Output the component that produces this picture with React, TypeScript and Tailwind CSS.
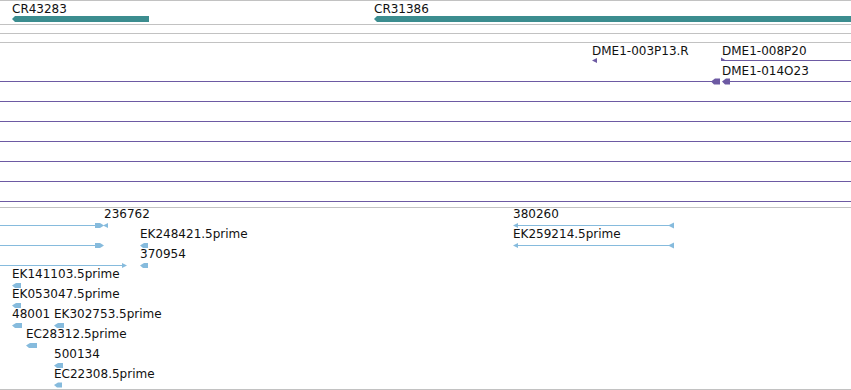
import React from "react";

// colours taken from the track glyphs
const TEAL = "#3c8d8f";
const PURPLE = "#6d5aa3";
const BLUE = "#86bbdd";

interface Label {
  text: string;
  x: number;
  y: number;
}

const Labels: React.FC<{ items: Label[] }> = ({ items }) => (
  <>
    {items.map((l) => (
      <div
        key={l.text}
        className="absolute whitespace-nowrap text-[12px] leading-[14px] text-[#111] font-['DejaVu_Sans',sans-serif]"
        style={{ left: l.x, top: l.y }}
      >
        {l.text}
      </div>
    ))}
  </>
);

// left pointing block, c = vertical centre
const leftBlock = (x0: number, x1: number, c: number, h = 5) => {
  const t = c - h / 2;
  const b = c + h / 2;
  return `${x0},${c} ${x0 + 4},${t} ${x1},${t} ${x1},${b} ${x0 + 3},${b}`;
};

const rightBlock = (x0: number, x1: number, c: number, h = 5) => {
  const t = c - h / 2;
  const b = c + h / 2;
  return `${x0},${t} ${x1 - 4},${t} ${x1},${c} ${x1 - 4},${b} ${x0},${b}`;
};

const Separator: React.FC = () => <div className="h-px w-full bg-[#c2c2c2]" />;

const GeneTrack: React.FC = () => (
  <div className="relative h-[23px] w-full">
    <svg className="absolute inset-0" width={851} height={23}>
      <polygon points="12,18 15,15 149,15 149,21 15,21" fill={TEAL} />
      <polygon points="374,18 377,15 851,15 851,21 377,21" fill={TEAL} />
    </svg>
    <Labels
      items={[
        { text: "CR43283", x: 12, y: 1 },
        { text: "CR31386", x: 374, y: 1 },
      ]}
    />
  </div>
);

const CloneTrack: React.FC = () => {
  const rows = [58, 78, 98, 118, 138, 158];
  return (
    <div className="relative h-[164px] w-full">
      <svg className="absolute inset-0" width={851} height={164}>
        {/* DME1-003P13.R */}
        <polygon points="592,17.5 597,15 597,20" fill={PURPLE} />
        {/* DME1-008P20 */}
        <rect x={722} y={17} width={129} height={1} fill={PURPLE} />
        <polygon points="721,14.5 726,17.5 721,18" fill={PURPLE} />
        {/* DME1-014O23 and neighbour */}
        <rect x={0} y={38} width={712} height={1} fill={PURPLE} />
        <rect x={730} y={38} width={121} height={1} fill={PURPLE} />
        <polygon points={leftBlock(711, 720, 38.5, 6)} fill={PURPLE} />
        <polygon points={leftBlock(722, 730, 38.5, 6)} fill={PURPLE} />
        {rows.map((y) => (
          <rect key={y} x={0} y={y} width={851} height={1} fill={PURPLE} />
        ))}
      </svg>
      <Labels
        items={[
          { text: "DME1-003P13.R", x: 592, y: 1 },
          { text: "DME1-008P20", x: 722, y: 1 },
          { text: "DME1-014O23", x: 722, y: 21 },
        ]}
      />
    </div>
  );
};

const EstTrack: React.FC = () => {
  const left: [number, number, number][] = [
    [140, 148, 37.5],
    [140, 148, 57.5],
    [12, 21, 77.5],
    [12, 21, 97.5],
    [12, 22, 117.5],
    [54, 64, 117.5],
    [26, 37, 137.5],
    [54, 63, 157.5],
    [54, 62, 177],
  ];
  return (
    <div className="relative h-[181px] w-full">
      <svg className="absolute inset-0" width={851} height={181}>
        {/* 236762 */}
        <rect x={0} y={17} width={96} height={1} fill={BLUE} />
        <polygon points={rightBlock(95, 104, 17.5)} fill={BLUE} />
        <polygon points="103,17.5 108,15 108,20" fill={BLUE} />
        {/* row 2 */}
        <rect x={0} y={37} width={96} height={1} fill={BLUE} />
        <polygon points={rightBlock(95, 104, 37.5)} fill={BLUE} />
        {/* row 3 */}
        <rect x={0} y={57} width={123} height={1} fill={BLUE} />
        <polygon points="122,55 127,57.5 122,60" fill={BLUE} />
        {left.map(([a, b, c]) => (
          <polygon key={`${a}-${c}`} points={leftBlock(a, b, c)} fill={BLUE} />
        ))}
        {/* 380260 / EK259214.5prime */}
        {[17, 37].map((y) => (
          <g key={y}>
            <rect x={515} y={y} width={157} height={1} fill={BLUE} />
            <polygon points={`513,${y + 0.5} 518,${y - 2} 518,${y + 3}`} fill={BLUE} />
            <polygon points={`668,${y + 0.5} 674,${y - 2.5} 674,${y + 3.5}`} fill={BLUE} />
          </g>
        ))}
      </svg>
      <Labels
        items={[
          { text: "236762", x: 104, y: -1 },
          { text: "EK248421.5prime", x: 140, y: 19 },
          { text: "370954", x: 140, y: 39 },
          { text: "EK141103.5prime", x: 12, y: 59 },
          { text: "EK053047.5prime", x: 12, y: 79 },
          { text: "48001", x: 12, y: 99 },
          { text: "EK302753.5prime", x: 54, y: 99 },
          { text: "EC28312.5prime", x: 26, y: 119 },
          { text: "500134", x: 54, y: 139 },
          { text: "EC22308.5prime", x: 54, y: 159 },
          { text: "380260", x: 513, y: -1 },
          { text: "EK259214.5prime", x: 513, y: 19 },
        ]}
      />
    </div>
  );
};

const App: React.FC = () => {
  return (
    <div className="flex h-[390px] w-[851px] flex-col overflow-hidden bg-white">
      <Separator />
      <GeneTrack />
      <Separator />
      <div className="h-2 w-full" />
      <Separator />
      <div className="h-2 w-full" />
      <Separator />
      <CloneTrack />
      <Separator />
      <EstTrack />
      <Separator />
    </div>
  );
};

export default App;
